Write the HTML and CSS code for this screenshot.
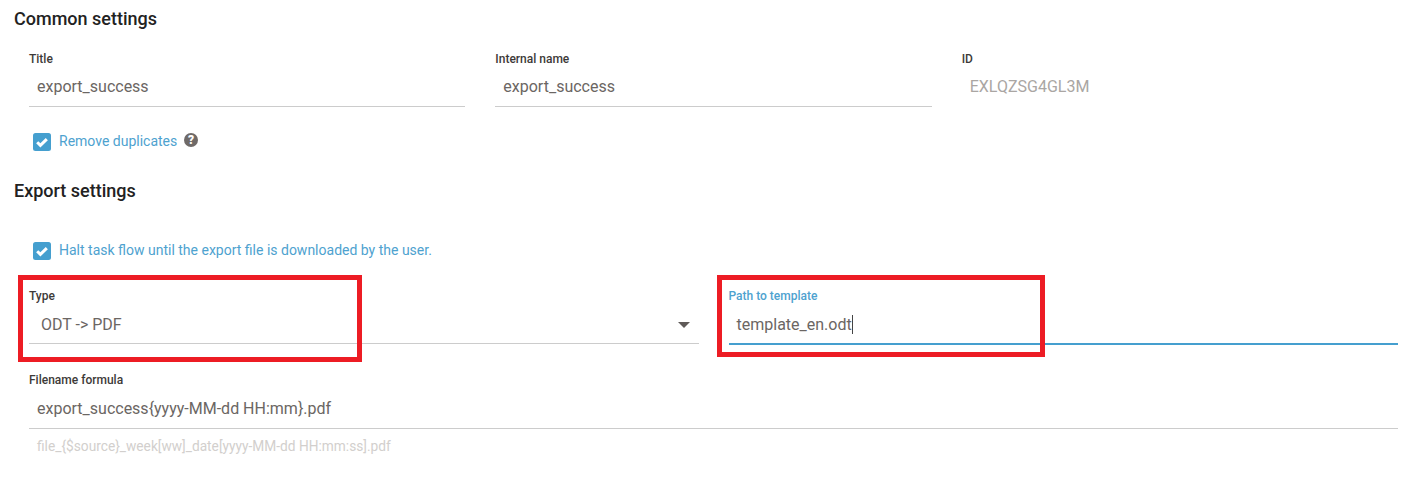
FILE: index.html
```html
<!DOCTYPE html>
<html>
    <head>
        <title>Export settings</title>
        <link rel="stylesheet" href="styles.css">
    </head>

    <body>
        <h2 class="Titulo Primero">Common settings</h2>

        <div class="Fila Tres">
            <div class="Campo">
                <label>Title</label>
                <div class="Valor">export_success</div>
            </div>
            <div class="Campo">
                <label>Internal name</label>
                <div class="Valor">export_success</div>
            </div>
            <div class="Campo SinLinea">
                <label>ID</label>
                <div class="Valor Gris">EXLQZSG4GL3M</div>
            </div>
        </div>

        <div class="Check Duplicados">
            <svg class="Caja" width="18" height="18" viewBox="0 0 18 18"><rect width="18" height="18" rx="2.5" fill="#459fcf"/><path d="M4.2 9.2l3.2 3.2 6.4-6.3" fill="none" stroke="#fff" stroke-width="3"/></svg>
            <span>Remove duplicates</span>
            <svg class="Ayuda" width="14" height="14" viewBox="0 0 14 14"><circle cx="7" cy="7" r="7" fill="#6f6a68"/><text x="7" y="11.3" text-anchor="middle" class="AyudaTexto">?</text></svg>
        </div>

        <h2 class="Titulo Segundo">Export settings</h2>

        <div class="Check Detener">
            <svg class="Caja" width="18" height="18" viewBox="0 0 18 18"><rect width="18" height="18" rx="2.5" fill="#459fcf"/><path d="M4.2 9.2l3.2 3.2 6.4-6.3" fill="none" stroke="#fff" stroke-width="3"/></svg>
            <span>Halt task flow until the export file is downloaded by the user.</span>
        </div>

        <div class="Fila Dos">
            <div class="Campo">
                <label>Type</label>
                <div class="Valor Select">
                    <span>ODT -&gt; PDF</span>
                    <i class="Flecha"></i>
                </div>
            </div>
            <div class="Campo Activo">
                <label>Path to template</label>
                <div class="Valor">template_en.odt<i class="Cursor"></i></div>
            </div>
        </div>

        <div class="Fila Formula">
            <div class="Campo">
                <label>Filename formula</label>
                <div class="Valor">export_success{yyyy-MM-dd HH:mm}.pdf</div>
                <div class="Ayudita">file_{$source}_week[ww]_date[yyyy-MM-dd HH:mm:ss].pdf</div>
            </div>
        </div>

        <!-- Marcas rojas sobre la captura -->
        <div class="Marca MarcaTipo"></div>
        <div class="Marca MarcaRuta"></div>
    </body>
</html>
```

FILE: styles.css
```css
html{
    background-color: white;
}

body{
    margin: 0;
    padding: 0 8px 0 14px;
    height: 483px;
    box-sizing: border-box;
    overflow: hidden;
    position: relative;
    font-family: Roboto, "Liberation Sans", sans-serif;
    color: #6b6663;
}

.Titulo{
    margin: 0;
    font-size: 18px;
    font-weight: 500;
    line-height: 20px;
    color: #222;
}

.Primero{
    padding-top: 9px;
}

.Segundo{
    margin-top: 30px;
}

.Fila{
    display: grid;
    grid-template-columns: 1fr;
}

.Tres{
    grid-template-columns: repeat(3, 1fr);
    margin-top: 22px;
}

.Dos{
    grid-template-columns: repeat(2, 1fr);
    margin-top: 28px;
}

.Formula{
    margin-top: 27px;
}

.Campo{
    padding: 0 15px;
}

.Campo label{
    display: block;
    font-size: 12px;
    font-weight: 500;
    line-height: 16px;
    color: #3d3a38;
}

.Valor{
    display: flex;
    align-items: center;
    height: 40px;
    padding-left: 8px;
    box-sizing: border-box;
    border-bottom: 1px solid #ccc;
    font-size: 16px;
    color: #6b6663;
}

.SinLinea .Valor{
    border-bottom: none;
}

.Gris{
    color: #aaa6a3;
    padding-bottom: 2px;
}

.Select{
    justify-content: space-between;
    padding-top: 2px;
    padding-left: 12px;
    padding-right: 9px;
}

.Formula .Valor{
    height: 41px;
    padding-top: 1px;
}

.Flecha{
    width: 0;
    height: 0;
    border-left: 6px solid transparent;
    border-right: 6px solid transparent;
    border-top: 6px solid #5f5a58;
}

.Activo label{
    color: #4ea2cf;
}

.Activo .Valor{
    height: 41px;
    padding-top: 2px;
    border-bottom: 2px solid #459fcf;
}

.Cursor{
    width: 1px;
    height: 19px;
    background-color: #444;
}

.Ayudita{
    margin-top: 8px;
    padding-left: 8px;
    font-size: 13.72px;
    line-height: 18px;
    color: #d2cfcd;
}

.Check{
    display: flex;
    align-items: center;
    padding-left: 19px;
    font-size: 14px;
    line-height: 18px;
    color: #4ea2cf;
}

.Caja{
    margin-right: 8px;
    margin-top: 2px;
}

.Duplicados{
    margin-top: 24px;
}

.Detener{
    margin-top: 39px;
}

.Ayuda{
    margin-left: 7px;
    margin-top: -3px;
}

.AyudaTexto{
    font-size: 12px;
    font-weight: 900;
    fill: white;
}

.Marca{
    position: absolute;
    box-sizing: border-box;
    border: 5px solid #ed1c24;
}

.MarcaTipo{
    left: 18px;
    top: 275px;
    width: 344px;
    height: 87px;
}

.MarcaRuta{
    left: 717px;
    top: 275px;
    width: 328px;
    height: 82px;
}
```
